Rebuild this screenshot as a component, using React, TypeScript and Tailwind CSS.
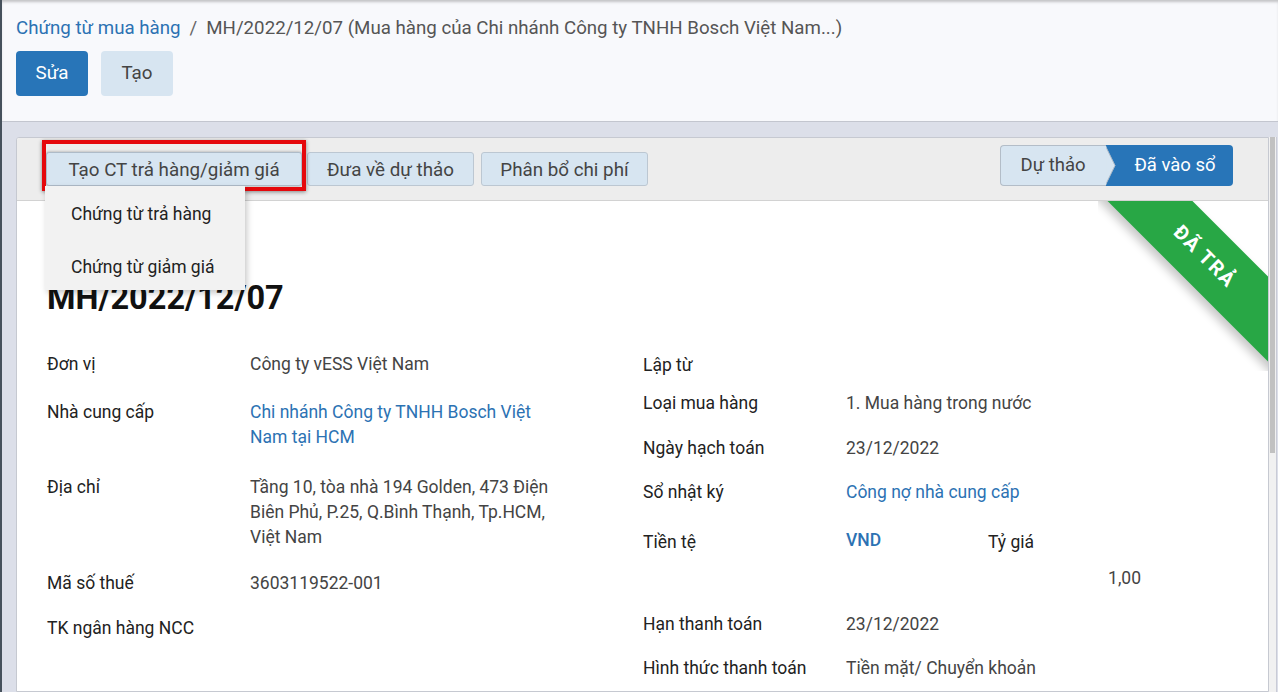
import React from "react";

const Row = ({ label, h, children, labelW = "w-[203px]" }: { label: string; h: string; children?: React.ReactNode; labelW?: string }) => (
  <div className={`flex items-start ${h}`}>
    <div className={`${labelW} shrink-0 text-[#222] leading-[25px]`}>{label}</div>
    <div className="leading-[25px] text-[#444]">{children}</div>
  </div>
);

export default function App() {
  return (
    <div className="w-[1278px] h-[692px] overflow-hidden flex flex-col border-l-2 border-[#46515c] bg-[#dcdfe9] font-['Roboto',sans-serif]">
      {/* Header */}
      <header className="h-[122px] shrink-0 bg-[#f8f9fc] border-b border-[#c3c6cf] pl-[14px] pt-[16px] shadow-[inset_0_3px_3px_-1px_rgba(0,0,0,0.22)]">
        <div className="flex items-center text-[18.7px] leading-[24px]">
          <span className="text-[#2c72b3]">Chứng từ mua hàng</span>
          <span className="text-[#666] mx-[9px]">/</span>
          <span className="text-[#555]">MH/2022/12/07 (Mua hàng của Chi nhánh Công ty TNHH Bosch Việt Nam...)</span>
        </div>
        <div className="flex gap-[13px] mt-[11px]">
          <button className="w-[72px] h-[45px] rounded-[4px] bg-[#2875b8] text-white text-[18.8px]">Sửa</button>
          <button className="w-[72px] h-[45px] rounded-[4px] bg-[#d7e5f1] text-[#444] text-[18.8px]">Tạo</button>
        </div>
      </header>

      {/* Main */}
      <div className="flex flex-1 min-h-0 pl-[14px] pt-[15px] pr-[1px]">
        <div className="flex-1 flex flex-col bg-white border border-[#c6c9d1] rounded-tl-[3px] overflow-hidden">
          {/* Statusbar */}
          <div className="h-[63px] shrink-0 bg-[#ededed] border-b border-[#d2d2d2] flex justify-between">
            <div className="flex pl-[29px] mt-[14px] h-[34px] text-[18.8px] text-[#444]">
              <div className="relative w-[256px] h-[34px]">
                <button className="w-full h-full pt-[2px] bg-[#d7e5f1] border border-[#aebbc8] rounded-[3px] shadow-[0_0_3px_rgba(0,0,0,0.35)]">Tạo CT trả hàng/giảm giá</button>
                <div className="absolute -left-[4px] -top-[12px] -right-[4px] -bottom-[5px] border-4 border-[#e5080c] shadow-[0_1px_4px_rgba(0,0,0,0.45)] pointer-events-none"></div>
                <div className="absolute left-[-1px] top-[34px] w-[200px] h-[104px] bg-[#f2f2f2] shadow-[2px_3px_6px_rgba(0,0,0,0.22)] z-20 pt-[16px] pl-[26px] text-[17.5px] text-[#222]">
                  <div className="leading-[24px]">Chứng từ trả hàng</div>
                  <div className="leading-[24px] mt-[29px]">Chứng từ giảm giá</div>
                </div>
              </div>
              <button className="ml-[5px] w-[167px] h-[34px] pt-[2px] bg-[#d7e5f1] border border-[#bcc7d2] rounded-[3px]">Đưa về dự thảo</button>
              <button className="ml-[7px] w-[167px] h-[34px] pt-[2px] bg-[#d7e5f1] border border-[#bcc7d2] rounded-[3px]">Phân bổ chi phí</button>
            </div>
            <div className="flex mt-[7px] mr-[35px] h-[41px] text-[18.5px]">
              <div className="relative z-10 w-[105px] h-full bg-[#d7e5f1] border border-r-0 border-[#b3bdc8] rounded-l-[4px] flex items-center justify-center text-[#444]">
                Dự thảo
                <svg className="absolute -right-[11px] -top-[1px]" width="11" height="41" viewBox="0 0 11 41">
                  <polygon points="0,0 10,20.5 0,41" fill="#d7e5f1" stroke="#b3bdc8" strokeWidth="1" />
                  <rect x="0" y="1" width="1.2" height="39" fill="#d7e5f1" />
                </svg>
              </div>
              <div className="w-[128px] h-full bg-[#2875b8] rounded-r-[4px] text-white flex items-center justify-center pl-[12px]">Đã vào sổ</div>
            </div>
          </div>

          {/* Body */}
          <div className="relative flex-1 pl-[30px] pt-[77px] text-[17.5px]">
            <div className="absolute right-0 top-0 w-[170px] h-[170px] overflow-hidden pointer-events-none">
              <div className="absolute left-[-43px] top-[24.5px] w-[300px] h-[60px] rotate-45 bg-[#28a745] shadow-[0_6px_10px_rgba(0,0,0,0.22)] flex items-center justify-center text-white font-bold text-[20px] tracking-[1.5px]">
                ĐÃ TRẢ
              </div>
            </div>

            <h1 className="text-[32.5px] leading-[40px] font-bold text-[#111]">MH/2022/12/07</h1>

            <div className="flex mt-[34px]">
              {/* Left column */}
              <div className="w-[596px] shrink-0">
                <Row label="Đơn vị" h="h-[48px]">Công ty vESS Việt Nam</Row>
                <Row label="Nhà cung cấp" h="h-[75px]">
                  <div className="w-[310px] text-[#2c72b3]">Chi nhánh Công ty TNHH Bosch Việt Nam tại HCM</div>
                </Row>
                <Row label="Địa chỉ" h="h-[96px]">
                  <div className="w-[310px]">Tầng 10, tòa nhà 194 Golden, 473 Điện Biên Phủ, P.25, Q.Bình Thạnh, Tp.HCM, Việt Nam</div>
                </Row>
                <Row label="Mã số thuế" h="h-[45px]">3603119522-001</Row>
                <Row label="TK ngân hàng NCC" h="h-[45px]"></Row>
              </div>
              {/* Right column */}
              <div className="flex-1 mt-[1px]">
                <Row label="Lập từ" h="h-[38px]"></Row>
                <Row label="Loại mua hàng" h="h-[45px]">1. Mua hàng trong nước</Row>
                <Row label="Ngày hạch toán" h="h-[44px]">23/12/2022</Row>
                <Row label="Sổ nhật ký" h="h-[50px]"><span className="text-[#2c72b3]">Công nợ nhà cung cấp</span></Row>
                <div className="flex items-start h-[36px]">
                  <div className="w-[203px] shrink-0 text-[#222] leading-[25px]">Tiền tệ</div>
                  <div className="w-[142px] shrink-0 leading-[25px] -mt-[2px] font-medium text-[#2c72b3]">VND</div>
                  <div className="leading-[25px] text-[#222]">Tỷ giá</div>
                </div>
                <div className="flex items-start h-[46px]">
                  <div className="w-[203px] shrink-0"></div>
                  <div className="w-[295px] text-right leading-[25px] text-[#444]">1,00</div>
                </div>
                <Row label="Hạn thanh toán" h="h-[44px]">23/12/2022</Row>
                <Row label="Hình thức thanh toán" h="h-[44px]">Tiền mặt/ Chuyển khoản</Row>
              </div>
            </div>
          </div>
        </div>

        {/* Scrollbar */}
        <div className="w-[8px] shrink-0 bg-[#f1f1f1] border-r border-[#c9cbd6] flex flex-col">
          <div className="h-[316px] bg-[#c1c1c1] mx-[1px]"></div>
        </div>
      </div>
    </div>
  );
}
